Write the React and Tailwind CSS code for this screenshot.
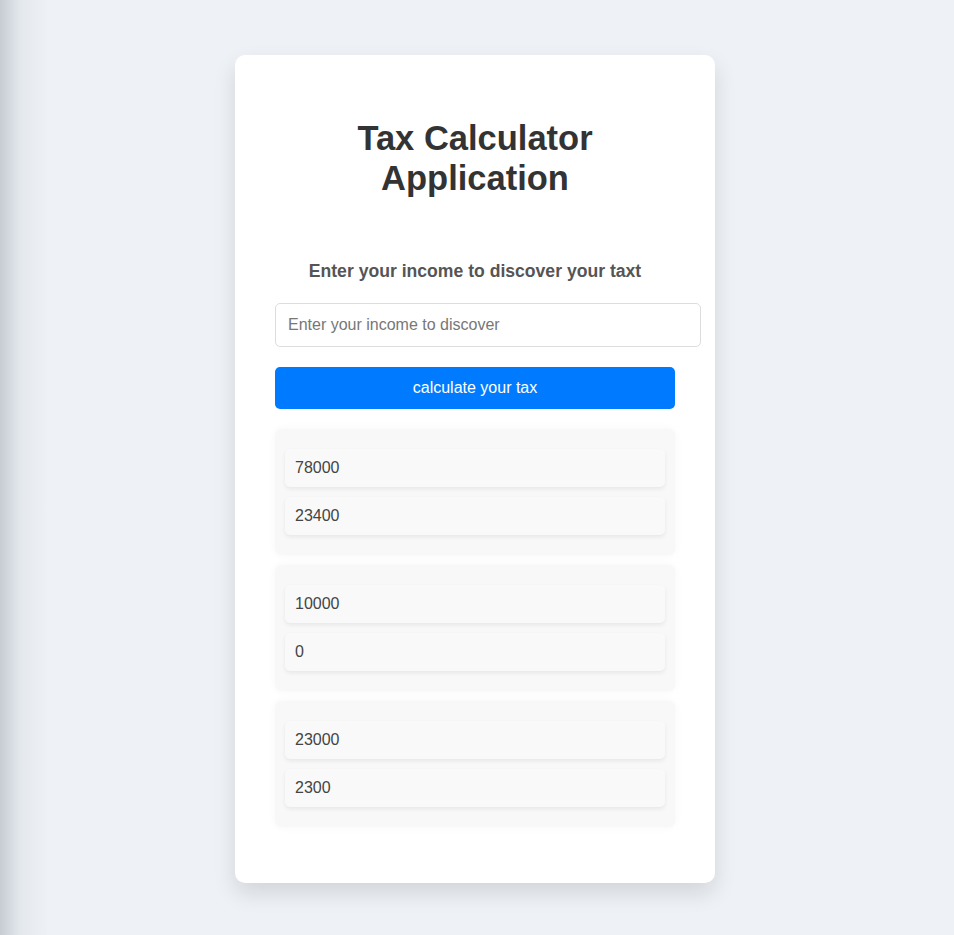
const results = [
  { income: "78000", tax: "23400" },
  { income: "10000", tax: "0" },
  { income: "23000", tax: "2300" },
];

const App = () => {
  return (
    <div
      className="min-h-screen w-full bg-[#eef2f7] bg-[linear-gradient(to_right,rgba(60,70,80,0.22),rgba(60,70,80,0.06)_20px,rgba(238,242,247,0)_48px)] flex justify-center pr-[4px] pt-[55px] pb-[52px]"
      style={{ fontFamily: '"Liberation Sans", Arial, sans-serif' }}
    >
      <div className="w-[480px] bg-white rounded-[10px] shadow-[0_10px_22px_rgba(0,0,0,0.12)] px-[40px] pt-[40px] pb-[50px]">
        <h1 className="mt-[23px] mx-auto w-[300px] text-center text-[34.5px] leading-[40px] font-bold text-[#333]">
          Tax Calculator Application
        </h1>

        <h3 className="mt-[63px] text-center text-[17.6px] leading-[20px] font-bold text-[#555]">
          Enter your income to discover your taxt
        </h3>

        <input
          type="text"
          placeholder="Enter your income to discover"
          className="mt-[22px] block w-[426px] h-[44px] px-[12px] border border-[#dddddd] rounded-[5px] text-[16px] text-[#333] placeholder:text-[#777] outline-none"
        />

        <button
          type="button"
          className="mt-[20px] block w-full h-[42px] bg-[#007bff] text-white text-[16px] rounded-[5px]"
        >
          calculate your tax
        </button>

        <div className="mt-[20px] flex flex-col gap-[10px]">
          {results.map((r) => (
            <div
              key={r.income}
              className="bg-[#f8f8f8] rounded-[6px] shadow-[0_0_8px_rgba(0,0,0,0.04)] px-[10px] py-[20px] flex flex-col gap-[10px]"
            >
              <div className="h-[38px] flex items-center px-[10px] bg-[#f9f9f9] rounded-[5px] shadow-[0_2px_4px_rgba(0,0,0,0.07)] text-[16px] text-[#444]">
                {r.income}
              </div>
              <div className="h-[38px] flex items-center px-[10px] bg-[#f9f9f9] rounded-[5px] shadow-[0_2px_4px_rgba(0,0,0,0.07)] text-[16px] text-[#444]">
                {r.tax}
              </div>
            </div>
          ))}
        </div>
      </div>
    </div>
  );
};

export default App;
